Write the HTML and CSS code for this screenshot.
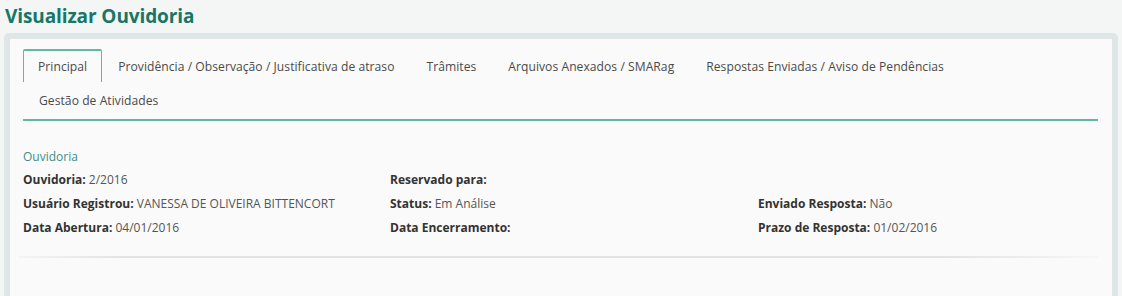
FILE: index.html
```html
<!DOCTYPE html>
<html lang="pt-BR">
<head>
    <meta charset="UTF-8">
    <title>Visualizar Ouvidoria</title>
    <link rel="stylesheet" href="styles.css">
</head>
<body>
    <h1 class="page-title">Visualizar Ouvidoria</h1>
    <div class="card">
        <ul class="tabs">
            <li class="tab active">Principal</li>
            <li class="tab">Providência / Observação / Justificativa de atraso</li>
            <li class="tab">Trâmites</li>
            <li class="tab">Arquivos Anexados / SMARag</li>
            <li class="tab">Respostas Enviadas / Aviso de Pendências</li>
            <li class="tab">Gestão de Atividades</li>
        </ul>

        <div class="section">
            <div class="section-title">Ouvidoria</div>
            <div class="fields">
                <div class="field"><b>Ouvidoria:</b> 2/2016</div>
                <div class="field"><b>Reservado para:</b></div>
                <div class="field"></div>

                <div class="field"><b>Usuário Registrou:</b> VANESSA DE OLIVEIRA BITTENCORT</div>
                <div class="field"><b>Status:</b> Em Análise</div>
                <div class="field"><b>Enviado Resposta:</b> Não</div>

                <div class="field"><b>Data Abertura:</b> 04/01/2016</div>
                <div class="field"><b>Data Encerramento:</b></div>
                <div class="field"><b>Prazo de Resposta:</b> 01/02/2016</div>
            </div>
            <hr class="divider">
        </div>
    </div>
</body>
</html>
```

FILE: styles.css
```css
body {
    margin: 0;
    padding: 0 4px;
    background: #f4f5f5;
    font-family: "Open Sans", Arial, sans-serif;
    font-size: 12px;
    color: #555;
}
.page-title {
    margin: 0;
    padding: 5px 1px 6px;
    line-height: 22px;
    font-size: 19px;
    font-weight: bold;
    color: #177766;
    letter-spacing: -0.1px;
}
.card {
    border: 6px solid #dfe6e8;
    border-radius: 5px;
    background: #fafafa;
    height: 300px;
    padding: 10px 14px 0 13px;
}
.tabs {
    list-style: none;
    margin: 0;
    padding: 0;
    display: flex;
    flex-wrap: wrap;
    border-bottom: 2px solid #5fb9a3;
    font-size: 12.1px;
}
.tab {
    height: 33px;
    line-height: 33px;
    padding: 0 15px;
    color: #4a4a4a;
    box-sizing: border-box;
    border: 1px solid transparent;
    letter-spacing: 0.05px;
}
.tab.active {
    padding: 0 14px;
    border: 1px solid #5fb9a3;
    border-top-width: 2px;
    border-bottom: none;
    line-height: 31px;
    border-radius: 2px 2px 0 0;
}
.tabs .tab:last-child {
    height: 37px;
    line-height: 35px;
}
.section {
    padding-top: 27px;
}
.section-title {
    color: #3a8f86;
    margin-bottom: 7px;
}
.fields {
    display: grid;
    grid-template-columns: 367px 368px 1fr;
    row-gap: 8px;
}
.field {
    height: 16px;
    line-height: 16px;
}
.field b {
    color: #333;
}
.divider {
    margin: 20px 0 0 -4px;
    border: none;
    height: 2px;
    background: linear-gradient(to right, #f4f4f4, #e2e2e2 10%, #e2e2e2 85%, #f6f6f6);
}
```
